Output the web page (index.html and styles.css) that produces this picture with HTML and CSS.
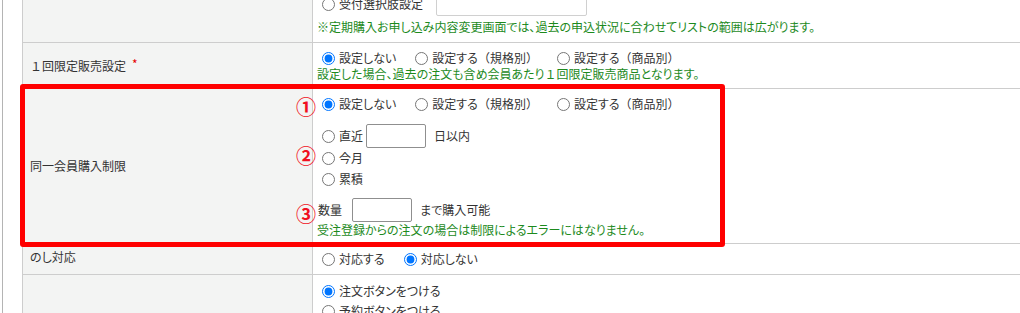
FILE: index.html
```html
<!DOCTYPE html>
<html lang="ja">
<head>
<meta charset="utf-8">
<title>設定</title>
<link rel="stylesheet" href="styles.css">
</head>
<body>
<div class="page">
  <div class="frame">
    <div class="tbl">
      <div class="row r1">
        <div class="lab"></div>
        <div class="val">
          <div class="line tall">
            <label class="opt"><input type="radio" name="a0">受付選択肢設定</label>
            <span class="box box-wide box-light"></span>
          </div>
          <div class="note">※定期購入お申し込み内容変更画面では、過去の申込状況に合わせてリストの範囲は広がります。</div>
        </div>
      </div>
      <div class="row r2">
        <div class="lab"><span class="fw">１</span>回限定販売設定<span class="req">*</span></div>
        <div class="val">
          <div class="line">
            <label class="opt"><input type="radio" name="a1" checked>設定しない</label>
            <label class="opt"><input type="radio" name="a1">設定する<span class="fw">（</span>規格別<span class="fw">）</span></label>
            <label class="opt"><input type="radio" name="a1">設定する<span class="fw">（</span>商品別<span class="fw">）</span></label>
          </div>
          <div class="note">設定した場合、過去の注文も含め会員あたり<span class="fw">１</span>回限定販売商品となります。</div>
        </div>
      </div>
      <div class="row r3">
        <div class="lab">同一会員購入制限</div>
        <div class="val">
          <div class="line">
            <label class="opt"><input type="radio" name="a2" checked>設定しない</label>
            <label class="opt"><input type="radio" name="a2">設定する<span class="fw">（</span>規格別<span class="fw">）</span></label>
            <label class="opt"><input type="radio" name="a2">設定する<span class="fw">（</span>商品別<span class="fw">）</span></label>
          </div>
          <div class="line tall l-recent">
            <label class="opt"><input type="radio" name="a3">直近</label>
            <span class="box"></span>
            <span class="after">日以内</span>
          </div>
          <div class="line l-month">
            <label class="opt"><input type="radio" name="a3">今月</label>
          </div>
          <div class="line l-total">
            <label class="opt"><input type="radio" name="a3">累積</label>
          </div>
          <div class="line tall l-qty">
            <span class="plain">数量</span>
            <span class="box"></span>
            <span class="after">まで購入可能</span>
          </div>
          <div class="note">受注登録からの注文の場合は制限によるエラーにはなりません。</div>
        </div>
      </div>
      <div class="row r4">
        <div class="lab">のし対応</div>
        <div class="val">
          <div class="line">
            <label class="opt"><input type="radio" name="a4">対応する</label>
            <label class="opt"><input type="radio" name="a4" checked>対応しない</label>
          </div>
        </div>
      </div>
      <div class="row r5">
        <div class="lab">予約<span class="req">*</span></div>
        <div class="val">
          <div class="line"><label class="opt"><input type="radio" name="a5" checked>注文ボタンをつける</label></div>
          <div class="line gap4"><label class="opt"><input type="radio" name="a5">予約ボタンをつける</label></div>
          <div class="line gap4"><label class="opt"><input type="radio" name="a5">ボタンをつけない</label></div>
          <div class="line gap4"><label class="opt"><input type="radio" name="a5">その他</label></div>
        </div>
      </div>
    </div>
  </div>

  <div class="hl"></div>
  <span class="num n1">①</span>
  <span class="num n2">②</span>
  <span class="num n3">③</span>
</div>
</body>
</html>
```

FILE: styles.css
```css
html, body {
  margin: 0;
  padding: 0;
  background: #fff;
}
body {
  font-family: "Noto Sans CJK JP", "Noto Sans", sans-serif;
  font-size: 12px;
  line-height: 16px;
  color: #333;
  overflow: hidden;
}
.page {
  position: relative;
  height: 313px;
  overflow: hidden;
}
.frame {
  margin-left: 2px;
  border-left: 1px solid #b4b4b4;
  padding-left: 19px;
  height: 400px;
}
.tbl {
  margin-top: -14px;
  font-feature-settings: "palt";
}
.fw {
  font-feature-settings: normal;
}
.row {
  display: grid;
  grid-template-columns: 291px 1fr;
  border-bottom: 1px solid #cdcdcd;
}
.lab {
  background: #f3f4f3;
  border-left: 1px solid #cdcdcd;
  border-right: 1px solid #cdcdcd;
  padding-left: 7px;
  display: flex;
  align-items: center;
}
.req {
  color: #e60000;
  margin-left: 6px;
  position: relative;
  top: -2px;
}
.val {
  padding: 7px 0 6px 4px;
}
.line {
  display: flex;
  align-items: center;
  height: 16px;
}
.line.tall {
  height: 24px;
}
.opt {
  display: inline-flex;
  align-items: center;
  margin-right: 14px;
}
.opt input {
  margin: 0 4px 0 5px;
  width: 13px;
  height: 13px;
}
.box {
  display: inline-block;
  width: 58px;
  height: 22px;
  border: 1px solid #8f8f8f;
  border-radius: 2px;
  background: #fff;
}
.opt + .box {
  margin-left: -11px;
}
.box-wide {
  width: 149px;
}
.opt + .box-wide {
  margin-left: -1px;
}
.box-light {
  border-color: #d0d0d0;
}
.after {
  margin-left: 8px;
}
.plain {
  margin-left: 1px;
  margin-right: 10px;
}
.note {
  color: #1d8a1d;
}
.r1 .val { padding-top: 6px; padding-bottom: 7px; }
.r1 .note { margin-top: 3px; }
.r3 .val { padding-bottom: 5px; }
.l-recent { margin-top: 12px; }
.l-month { margin-top: 2px; }
.l-total { margin-top: 5px; }
.l-qty { margin-top: 11px; height: 23px; }
.r4 .val { padding-top: 7px; padding-bottom: 7px; }
.r4 .lab { align-items: flex-start; padding-top: 5px; }
.r5 .val { padding-top: 8px; padding-bottom: 60px; }
.gap4 { margin-top: 4px; }

.hl {
  position: absolute;
  left: 20px;
  top: 84px;
  width: 695px;
  height: 153px;
  border: 5px solid #ff0000;
  border-radius: 3px;
}
.num {
  position: absolute;
  left: 296px;
  font-size: 20px;
  line-height: 20px;
  font-weight: 700;
  color: #f01020;
}
.n1 { top: 97px; }
.n2 { top: 146px; }
.n3 { top: 204px; }
```
